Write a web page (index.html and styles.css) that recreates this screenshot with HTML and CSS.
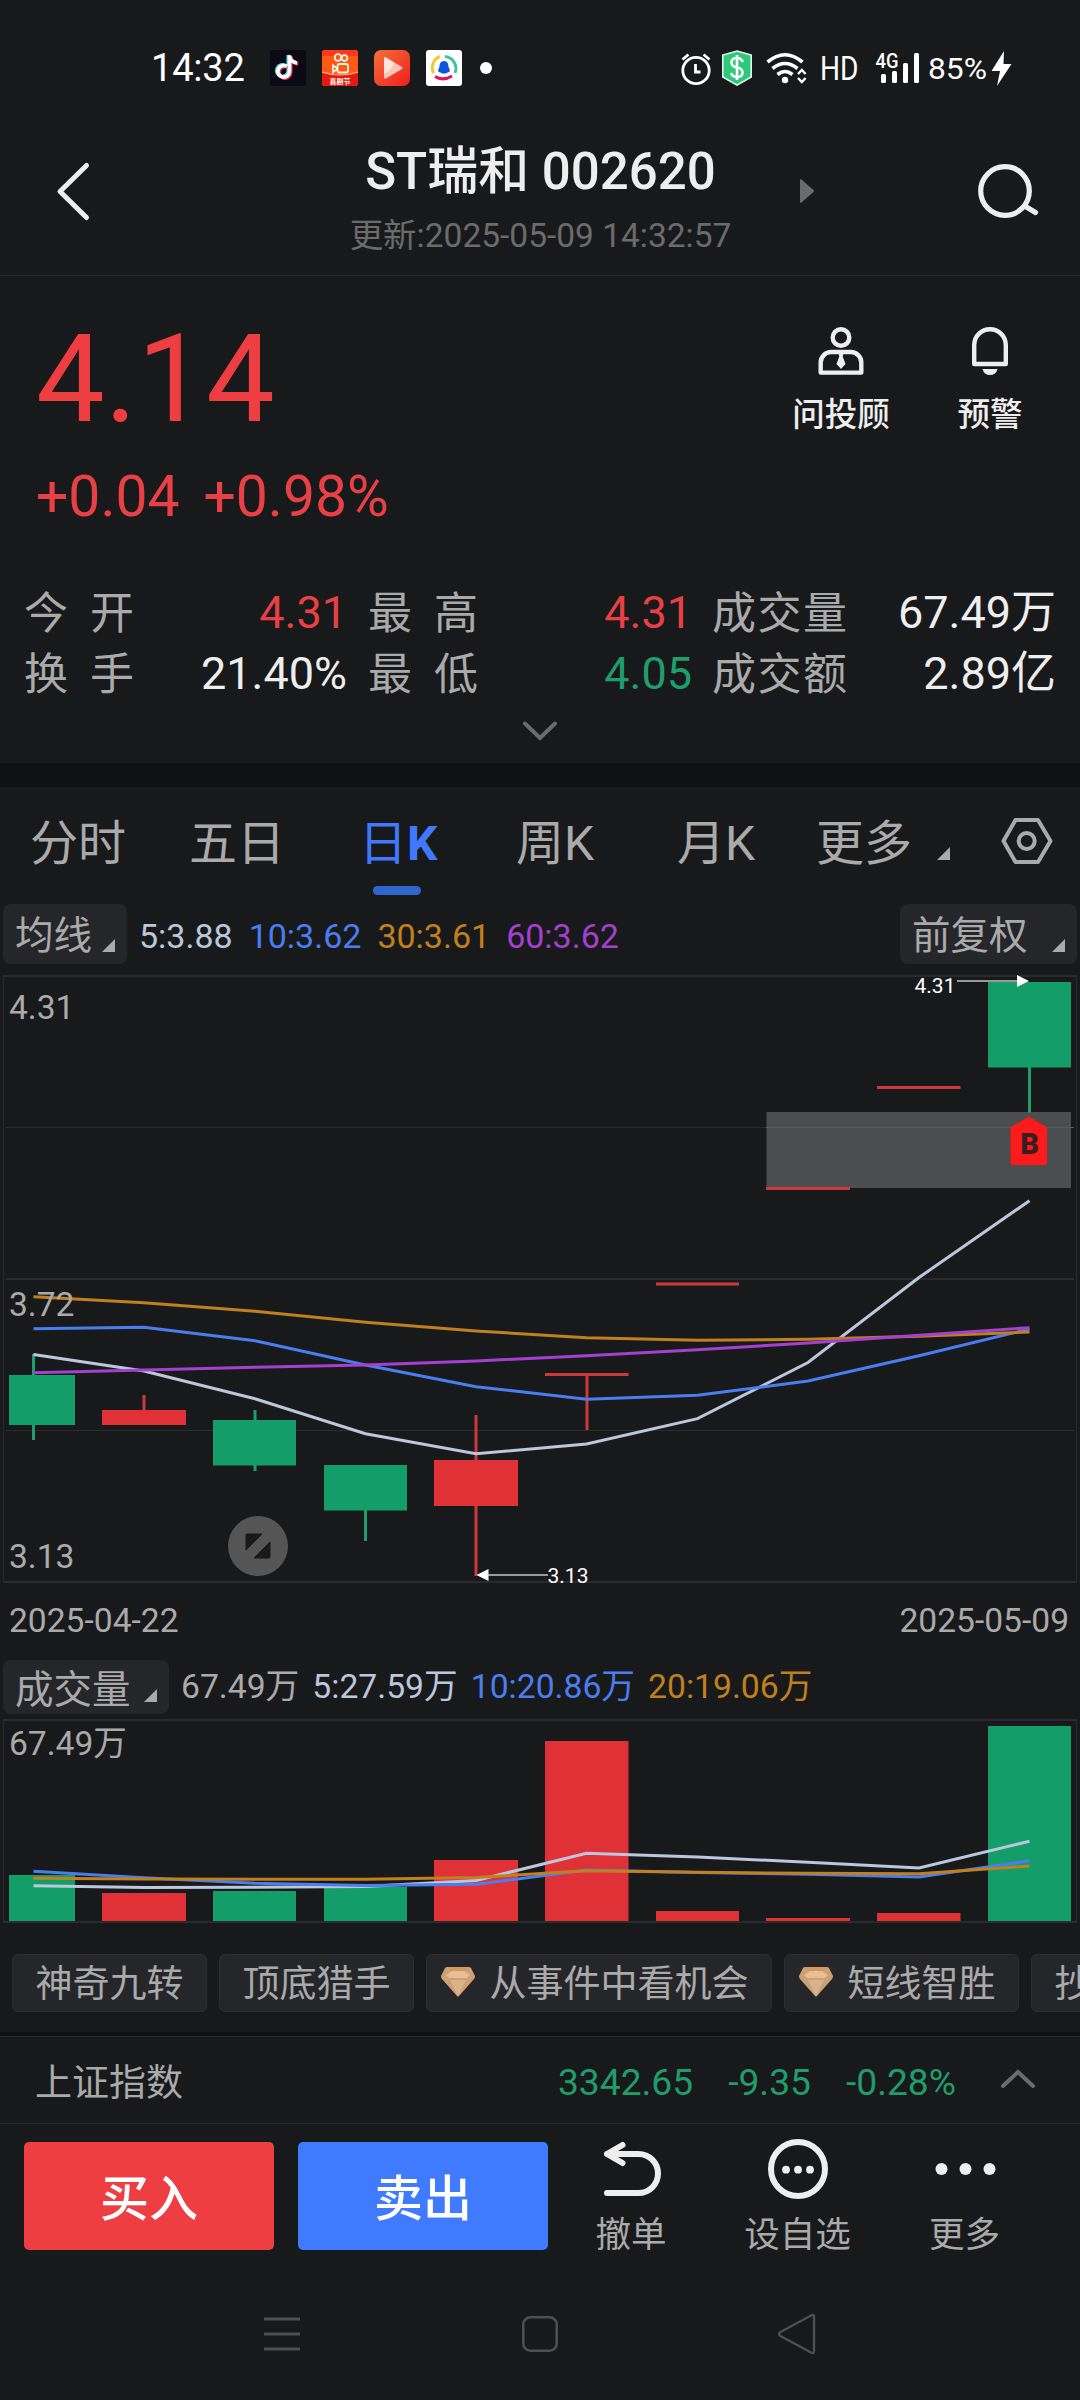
FILE: index.html
```html
<!DOCTYPE html>
<html lang="zh-CN">
<head>
<meta charset="utf-8">
<title>ST瑞和 002620</title>
<link rel="stylesheet" href="styles.css">
</head>
<body>
<div class="screen">
  <div class="status">
    <span class="clock">14:32</span>
    <div class="apps">
      <svg width="36" height="36" viewBox="0 0 36 36"><rect width="36" height="36" rx="3" fill="#0b0a14"/><g fill="none" stroke-width="3.600"><path d="M17 16.500a5.800 5.800 0 1 0 2.500 5V5.500c.6 4 3.500 7 7.500 7.500" stroke="#58e0e4" transform="translate(-1.200 -.6)"/><path d="M17 16.500a5.800 5.800 0 1 0 2.500 5V5.500c.6 4 3.500 7 7.500 7.500" stroke="#f2385c" transform="translate(1.200 1)"/><path d="M17 16.500a5.800 5.800 0 1 0 2.500 5V5.500c.6 4 3.500 7 7.500 7.500" stroke="#fff"/></g></svg>
      <svg width="36" height="36" viewBox="0 0 36 36"><rect width="36" height="36" rx="3" fill="#ff5a14"/><path d="M3 0h30a3 3 0 0 1 3 3v3H0V3a3 3 0 0 1 3-3z" fill="#ff3a1c"/><path d="M0 22q18 6 36 0v11a3 3 0 0 1-3 3H3a3 3 0 0 1-3-3z" fill="#e8180c"/><path d="M0 22q18 6 36 0" fill="none" stroke="#ffb48c" stroke-width="1.200"/><g fill="none" stroke="#fff3e4" stroke-width="1.800"><circle cx="16" cy="7.500" r="3.300"/><circle cx="22.500" cy="8" r="2.800"/><rect x="15.500" y="14" width="10.500" height="8.500" rx="2"/><path d="M15 18.200l-4-3v7l4-3"/></g><text x="18" y="33.500" class="app-tag">喜剧节</text></svg>
      <svg width="36" height="36" viewBox="0 0 36 36"><defs><linearGradient id="play" x1="0" y1="0" x2="1" y2="1"><stop offset="0" stop-color="#f4713a"/><stop offset="1" stop-color="#f01e1e"/></linearGradient></defs><rect width="36" height="36" rx="7" fill="url(#play)"/><path d="M10 8.500q0-2 2-1l16 9.500q1 1 0 2l-16 9.500q-2 1-2-1z" fill="#ffc4b8"/><path d="M10 8.500q0-2 2-1l8 5q-3 9-10 11z" fill="#ffe4dc"/></svg>
      <svg width="36" height="36" viewBox="0 0 36 36"><rect width="36" height="36" rx="3" fill="#fff"/><g fill="none" stroke-width="3"><path d="M14 6.500A12 12 0 0 0 7.500 23" stroke="#f3c73c"/><path d="M19 6.500A12 12 0 0 1 29 23" stroke="#3cc4a0"/><path d="M9 26.500q8 5 17-.5" stroke="#e0145c"/></g><path d="M18 11c4 0 4.500 4 4.500 6 2 3 1.500 6-.5 5-1.500 2-6.500 2-8 0-2 1-2.500-2-.5-5 0-2 .5-6 4.500-6z" fill="#0c54dc"/></svg>
      <i class="dot"></i>
    </div>
    <svg class="sysicons" width="335" height="40" viewBox="680 48 335 40">
      <g fill="none" stroke="#fff" stroke-width="2.800"><circle cx="696" cy="70.500" r="13.200"/><path d="M682.500 59.500l6-5M703.500 54.500l6 5M695.500 64v8h5"/></g>
      <path d="M737 51l14.200 4v22L737 85.200 722.800 77V55z" fill="#2fc97c" stroke="#dff8ea" stroke-width="1.600"/>
      <path d="M743 62q-2-4-6-4-5.500 0-5.500 4.500 0 4 5.500 5t5.500 5q0 4.500-5.500 4.500-4.500 0-6-4M737 55v25" fill="none" stroke="#fff" stroke-width="2.600"/>
      <g fill="none" stroke="#fff" stroke-width="3.600"><path d="M767.500 62q17.500-14.500 35 0M772.500 68.500q12.500-10 25 0M777.500 74.500q7.500-6 15 0"/></g>
      <circle cx="785" cy="80" r="3.200" fill="#fff"/><path d="M798 74l3.800-4 3.800 4M798 78l3.800 4 3.800-4" fill="none" stroke="#fff" stroke-width="2.400"/>
      <text x="820" y="80" class="sys hd" textLength="38.500" lengthAdjust="spacingAndGlyphs">HD</text>
      <text x="875.500" y="68" class="sys net" textLength="23" lengthAdjust="spacingAndGlyphs">4G</text>
      <g fill="#fff"><rect x="881" y="74" width="5" height="9" rx="1.500"/><rect x="892" y="71" width="5" height="12" rx="1.500"/><rect x="903" y="63" width="5" height="20" rx="1.500"/><rect x="914" y="53" width="5" height="30" rx="1.500"/></g>
      <text x="928" y="79" class="sys bat" textLength="59" lengthAdjust="spacingAndGlyphs">85%</text>
      <path d="M1004 51l-12.500 20h8.500l-3 15 14.500-22h-8z" fill="#fff"/>
    </svg>
  </div>

  <header class="header">
    <svg class="back" width="40" height="64" viewBox="54 160 40 64"><path d="M86.500 165.500L60 191.500l26.500 26" class="ln" stroke-width="5"/></svg>
    <div class="titles"><h1>ST瑞和 002620</h1><p>更新:2025-05-09 14:32:57</p></div>
    <svg class="next" width="14" height="24" viewBox="0 0 14 24"><path d="M0 1.500Q0-1 2 1l11.500 10q1 1 0 2L2 23q-2 2-2-.5z" fill="#6b6b6b"/></svg>
    <svg class="search" width="64" height="60" viewBox="976 162 64 60"><g class="ln" stroke-width="5.200"><circle cx="1005" cy="191" r="24.300"/><path d="M1025.500 206.500l10 6"/></g></svg>
  </header>

  <section class="quote">
    <div class="summary">
      <div class="price-box">
        <div class="price">4.14</div>
        <div class="change"><span>+0.04</span><span>+0.98%</span></div>
      </div>
      <div class="actions">
        <div class="action"><svg width="48" height="48" viewBox="0 0 48 48"><g class="ln" stroke-width="4.400"><circle cx="24" cy="10.500" r="8.300"/><path d="M3.700 45.600V35.500A10.500 10.500 0 0 1 14.200 25h19.600a10.500 10.500 0 0 1 10.500 10.500v10.100z"/></g><path d="M21.500 26h5l-.8 3.500 2.800 7.500-4.500 5-4.500-5 2.800-7.500z" fill="#eee"/></svg><span>问投顾</span></div>
        <div class="action"><svg width="48" height="48" viewBox="0 0 48 48"><path d="M8.200 37V18a15.800 15.800 0 0 1 31.600 0v19z" class="ln" stroke-width="4.400"/><path d="M16.500 42h15q-1.500 6-7.500 6t-7.500-6z" fill="#eee"/></svg><span>预警</span></div>
      </div>
    </div>
    <div class="stats">
      <div class="stat wide"><span>今开</span><b class="up">4.31</b></div>
      <div class="stat wide"><span>最高</span><b class="up">4.31</b></div>
      <div class="stat"><span>成交量</span><b>67.49万</b></div>
      <div class="stat wide"><span>换手</span><b>21.40%</b></div>
      <div class="stat wide"><span>最低</span><b class="down">4.05</b></div>
      <div class="stat"><span>成交额</span><b>2.89亿</b></div>
    </div>
    <svg class="expand" width="40" height="24" viewBox="0 0 40 24"><path d="M5 4.500l15 14.500 15-14.500" fill="none" stroke="#6b6b6b" stroke-width="4" stroke-linecap="round"/></svg>
  </section>

  <nav class="tabs">
    <span>分时</span><span>五日</span><span class="active">日<b>K</b></span><span>周K</span><span>月K</span>
    <span class="more">更多<i class="corner"></i></span>
    <svg width="54" height="50" viewBox="0 0 54 50"><g fill="none" stroke="#aaa" stroke-width="4"><path d="M15.500 4h22.500l12.500 21-12.500 21H15.500L3.500 25z" stroke-linejoin="round"/><circle cx="26.700" cy="25" r="8"/></g></svg>
  </nav>

  <div class="legend ma">
    <span class="chip">均线<i class="corner"></i></span>
    <span class="c5">5:3.88</span><span class="c10">10:3.62</span><span class="c30">30:3.61</span><span class="c60">60:3.62</span>
    <span class="chip adj">前复权<i class="corner"></i></span>
  </div>

  <svg class="chart" width="1080" height="624" viewBox="0 964 1080 624">
    <g class="grid"><path d="M3 976h1074M3 1582h1074M6 1279h1068" stroke-width="2"/><path d="M3.500 976v606M1076.500 976v606M6 1127.500h1068M6 1430.500h1068"/></g>
    <rect x="766.500" y="1112" width="304.500" height="76" fill="#4c4d4e"/><path d="M766 1127.500h308" stroke="#5c5d5e"/>
    <g class="g"><path d="M33.500 1354v86M255 1410v61M365.500 1465v76M1029.500 1067v45.500"/>
      <rect x="9" y="1375" width="66" height="50"/><rect x="213" y="1420" width="83" height="45.500"/><rect x="324" y="1465" width="83" height="45.500"/><rect x="988" y="982" width="83" height="85.500"/></g>
    <g class="r"><path d="M144 1395v16M476 1415v161M587 1375v55M545 1374.500h83.500M656 1284h83M766 1188.500h84M877 1087.500h83.500"/>
      <rect x="102" y="1410" width="84" height="15"/><rect x="434" y="1460" width="84" height="46"/></g>
    <g class="lines">
      <polyline class="c5" points="33.500,1354.500 144,1371 255,1398.700 365.500,1433.700 476,1453.700 586.500,1444 697.500,1418.700 808,1362.500 919,1277.500 1029.500,1200.700"/>
      <polyline class="c10" points="33.500,1328.700 144,1327.300 255,1340.700 365.500,1365 476,1386.700 586.500,1399.300 697.500,1395.300 808,1381 919,1355.700 1029.500,1329"/>
      <polyline class="c30" points="33.500,1296.700 144,1302.700 255,1311.300 365.500,1322.300 476,1331 586.500,1337.700 697.500,1340.300 808,1339.300 919,1336.300 1029.500,1332"/>
      <polyline class="c60" points="33.500,1372.700 144,1370 255,1367.300 365.500,1365 476,1361 586.500,1355.700 697.500,1349.700 808,1343 919,1335.300 1029.500,1327.700"/>
    </g>
    <path d="M957 981h62M488 1575h60" stroke="#999" stroke-width="2"/><path d="M1017 975l12 6-12 6zM488.500 1569l-12 6 12 6z" fill="#fff"/>
    <text x="914.500" y="992.700" class="mark">4.31</text><text x="547.500" y="1583" class="mark">3.13</text>
    <path d="M1029 1116.700l18 10.500V1163q0 2-2 2h-32.500q-2 0-2-2v-35.800z" fill="#fc1a1a"/><text x="1029.500" y="1154" class="buy">B</text>
    <text x="9" y="1019" class="axis">4.31</text><text x="9" y="1316" class="axis">3.72</text><text x="9" y="1568" class="axis">3.13</text>
    <circle cx="258" cy="1546" r="30" fill="#555"/><path d="M247 1534h15l-16 16v-15q0-1 1-1zM270 1542v15q0 1-1 1h-15z" fill="#18191b" stroke="#18191b" stroke-linejoin="round"/>
  </svg>
  <div class="dates"><span>2025-04-22</span><span>2025-05-09</span></div>

  <div class="legend vol">
    <span class="chip">成交量<i class="corner"></i></span>
    <span>67.49万</span><span class="c5">5:27.59万</span><span class="c10">10:20.86万</span><span class="c30">20:19.06万</span>
  </div>
  <svg class="chart" width="1080" height="240" viewBox="0 1714 1080 240">
    <g class="grid"><path d="M3 1720h1074M3 1922h1074" stroke-width="2"/><path d="M3.500 1720v202M1076.500 1720v202"/></g>
    <g class="g"><rect x="9" y="1875" width="66" height="46"/><rect x="213" y="1891" width="83" height="30"/><rect x="324" y="1887" width="83" height="34"/><rect x="988" y="1726" width="83" height="195"/></g>
    <g class="r"><rect x="102" y="1893" width="84" height="28"/><rect x="434" y="1860" width="84" height="61"/><rect x="545" y="1741" width="83.500" height="180"/><rect x="656" y="1911" width="83" height="10"/><rect x="766" y="1918" width="84" height="3"/><rect x="877" y="1913" width="83.500" height="8"/></g>
    <g class="lines">
      <polyline class="c5" points="33.500,1885.700 144,1887.500 255,1887.300 365.500,1886.500 476,1880.500 586.500,1853.300 697.500,1857 808,1862.300 919,1868 1029.500,1841.300"/>
      <polyline class="c10" points="33.500,1871.300 144,1877.700 255,1883.300 365.500,1885.500 476,1884.300 586.500,1870 697.500,1872.500 808,1874.300 919,1877 1029.500,1860.700"/>
      <polyline class="c30" points="33.500,1878.300 144,1879 255,1879.300 365.500,1879.300 476,1877.500 586.500,1870.700 697.500,1872.300 808,1873.300 919,1873.700 1029.500,1866"/>
    </g>
    <text x="9" y="1755" class="axis">67.49万</text>
  </svg>

  <div class="tools">
    <span class="tool">神奇九转</span>
    <span class="tool">顶底猎手</span>
    <span class="tool vip"><svg width="34" height="30" viewBox="0 0 34 30"><path d="M6 0h22q1 0 2 1l4 8q0 2-1 3L18 29q-1 1-2 0L1 12q-1-1-1-3l4-8q1-1 2-1z" fill="#cda174"/><path d="M6 0h22l-5 5H11z" fill="#d39a60"/><path d="M5 8l6-4h12l6 4-3 3H8z" fill="#e6bf96"/><path d="M9 13h16l-8 16z" fill="#d9b489"/></svg>从事件中看机会</span>
    <span class="tool vip"><svg width="34" height="30" viewBox="0 0 34 30"><path d="M6 0h22q1 0 2 1l4 8q0 2-1 3L18 29q-1 1-2 0L1 12q-1-1-1-3l4-8q1-1 2-1z" fill="#cda174"/><path d="M6 0h22l-5 5H11z" fill="#d39a60"/><path d="M5 8l6-4h12l6 4-3 3H8z" fill="#e6bf96"/><path d="M9 13h16l-8 16z" fill="#d9b489"/></svg>短线智胜</span>
    <span class="tool">抄</span>
  </div>

  <div class="index">
    <span class="name">上证指数</span>
    <span>3342.65</span><span>-9.35</span><span>-0.28%</span>
    <svg width="36" height="20" viewBox="0 0 36 20"><path d="M3 17L18 3l15 14" fill="none" stroke="#6b6b6b" stroke-width="4" stroke-linecap="round"/></svg>
  </div>

  <div class="trade">
    <button class="btn buy-btn">买入</button>
    <button class="btn sell-btn">卖出</button>
    <div class="op"><svg width="64" height="64" viewBox="0 0 64 64"><path d="M23.500 8L8 17l15.500 9M8 17H39.500a19.500 19.500 0 0 1 0 39H8" class="ln" stroke-width="6"/></svg><span>撤单</span></div>
    <div class="op"><svg width="64" height="64" viewBox="0 0 64 64"><circle cx="32" cy="32" r="27" class="ln" stroke-width="6"/><g fill="#eee"><circle cx="20" cy="32.700" r="3.900"/><circle cx="32" cy="32.700" r="3.900"/><circle cx="44" cy="32.700" r="3.900"/></g></svg><span>设自选</span></div>
    <div class="op"><svg width="64" height="64" viewBox="0 0 64 64"><g fill="#eee"><circle cx="8.500" cy="32" r="6"/><circle cx="32.500" cy="32" r="6"/><circle cx="56.500" cy="32" r="6"/></g></svg><span>更多</span></div>
  </div>

  <div class="sysnav">
    <svg width="40" height="44" viewBox="0 0 40 44"><path d="M2 7h36M2 22h36M2 37h36" stroke="#4e4f50" stroke-width="2.800"/></svg>
    <svg width="40" height="44" viewBox="0 0 40 44"><rect x="3.300" y="5.300" width="33.400" height="33.400" rx="7" fill="none" stroke="#4e4f50" stroke-width="2.600"/></svg>
    <svg width="40" height="44" viewBox="0 0 40 44"><path d="M33 3.500Q36 2 36 5v34q0 3-3 1.500L2.500 24q-3-2 0-4z" fill="none" stroke="#4e4f50" stroke-width="2.400"/></svg>
  </div>
</div>
</body>
</html>
```
FILE: styles.css
```css
* { box-sizing: border-box; }
body {
  margin: 0;
  background: #18191b;
  color: #aaa;
  font-family: Roboto, "Noto Sans CJK SC", sans-serif;
}
svg { display: block; flex: none; }
.screen { width: 1080px; height: 2400px; overflow: hidden; display: flex; flex-direction: column; }
.screen > * { flex: none; }
.ln { fill: none; stroke: #eee; stroke-linecap: round; stroke-linejoin: round; }

/* system status bar */
.status { height: 136px; padding: 0 65px 0 151px; display: flex; align-items: center; }
.clock { width: 119px; font-size: 38px; letter-spacing: -0.2px; color: #fff; }
.apps { display: flex; align-items: center; gap: 16px; }
.app-tag { font-size: 7px; font-weight: 700; fill: #fff; text-anchor: middle; }
.dot { width: 12px; height: 12px; margin-left: 2px; border-radius: 50%; background: #fff; }
.sysicons { margin-left: auto; }
.sys { fill: #fff; }
.hd { font-size: 34px; }
.net { font-size: 20px; font-weight: 500; }
.bat { font-size: 30px; }

/* title bar */
.header { height: 140px; display: grid; grid-template-columns: 280px 521px 173px 1fr; border-bottom: 1px solid #2a2b2d; }
.back { margin: 24px 0 0 54px; }
.titles { text-align: center; white-space: nowrap; }
.titles h1 { margin: 0; font-size: 51px; line-height: 72px; font-weight: 500; color: #eee; }
.titles p { margin: 5px 0 0; font-size: 33.5px; line-height: 45px; color: #6b6b6b; }
.next { margin-top: 43px; margin-left: -1px; }
.search { margin: 26px 0 0 2px; }

/* price summary */
.quote { height: 511px; border-bottom: 24px solid #101113; }
.summary { height: 307px; padding: 33px 30px 0 36px; display: flex; justify-content: space-between; }
.price { font-size: 122.5px; line-height: 141px; color: #ee3e42; }
.change { display: flex; gap: 24px; margin-top: 12px; font-size: 57px; line-height: 70px; color: #e94045; }
.actions { display: flex; gap: 29px; padding-top: 18px; }
.action { width: 120px; display: flex; flex-direction: column; align-items: center; font-size: 32.5px; line-height: 40px; font-weight: 500; color: #eee; }
.action span { margin-top: 20px; }
.stats { display: grid; grid-template-columns: 322px 324px 344px; column-gap: 22px; padding-left: 24px; line-height: 60px; grid-auto-rows: 61px; }
.stat { display: flex; justify-content: space-between; font-size: 45px; white-space: nowrap; }
.stat:nth-child(3n) { margin-left: -2px; margin-right: 2px; }
.stat span { font-size: 44px; letter-spacing: 1.5px; padding-top: 1px; }
.stat.wide span { letter-spacing: 22px; }
.stat b { font-weight: 400; color: #eee; }
.stat:nth-child(3n+1) b { margin-right: -1px; }
.stat .up { color: #e94045; }
.stat .down { color: #1f9d6c; }
.expand { margin: 14px auto 0; }

/* period tabs */
.tabs { height: 117px; padding-left: 30px; display: grid; grid-template-columns: 159px 170px 157px 161px 139px 184px 54px; font-size: 48px; line-height: 114px; }
.tabs svg { margin-top: 29px; }
.active { position: relative; color: #4079ff; }
.active::after { content: ""; position: absolute; left: 14px; top: 99px; width: 48px; height: 9px; border-radius: 4.5px; background: #2f65cf; }
.corner { display: inline-block; width: 13px; height: 13px; background: #aaa; clip-path: polygon(100% 0, 100% 100%, 0 100%); }
.more .corner { margin-left: 25px; }

/* indicator legends */
.legend { display: flex; padding: 0 3px; font-size: 34px; white-space: nowrap; }
.chip { display: flex; align-items: flex-end; justify-content: space-between; padding: 0 12px; border-radius: 8px; background: #25262a; font-size: 38.5px; }
.ma { height: 60px; line-height: 64px; gap: 16px; }
.ma .chip { width: 124px; height: 60px; margin-right: -4px; line-height: 56px; }
.ma .chip.adj { width: 177px; margin: 0 0 0 auto; }
.ma .corner { margin-bottom: 12px; }
.vol { height: 54px; line-height: 54px; gap: 13px; font-size: 33.7px; }
.vol .chip { width: 166px; height: 54px; margin-right: -1px; line-height: 48px; }
.vol .corner { margin-bottom: 12px; }
.c5 { color: #bcc6dc; }
.c10 { color: #4a7df0; }
.c30 { color: #c0801e; }
.c60 { color: #a43fd0; }

/* charts */
.grid path { fill: none; stroke: #2a2b2e; }
.g { fill: #139e69; }
.r { fill: #e03236; }
.g path { stroke: #1f9d6c; stroke-width: 3; }
.r path { stroke: #cf383b; stroke-width: 3; }
.lines polyline { fill: none; stroke: currentColor; stroke-width: 3; }
.axis { font-size: 33.6px; fill: #aaa; }
.mark { font-size: 21px; fill: #fff; }
.buy { font-size: 29px; font-weight: 900; fill: #3a1c22; text-anchor: middle; }
.dates { height: 72px; padding: 10px 11px 0 9px; display: flex; justify-content: space-between; font-size: 33.6px; line-height: 45px; }

/* tool chips */
.tools { height: 82px; padding-left: 12px; display: flex; align-items: flex-start; gap: 12px; overflow: hidden; border-bottom: 4px solid #101113; }
.tool { flex: none; height: 58px; padding: 0 22.5px; border: 1px solid #2c2d30; border-radius: 6px; background: #25262a; font-size: 37px; line-height: 60px; display: flex; }
.tool.vip { padding: 0 22.5px 0 14px; }
.tool svg { margin: 12px 14.5px 0 0; }

/* index strip */
.index { height: 88px; padding: 0 44px 0 35px; display: flex; border-top: 1px solid #2a2b2d; border-bottom: 1px solid #2a2b2d; font-size: 37.2px; line-height: 91px; color: #1f9d6c; gap: 35px; }
.index .name { color: #aaa; margin-right: auto; font-size: 37px; line-height: 94px; }
.index svg { margin: 32px 0 0 9px; }

/* trading bar */
.trade { height: 156px; padding: 18px 0 0 24px; display: flex; }
.btn { width: 250px; height: 108px; margin-right: 24px; padding: 8px 0 0; border: 0; border-radius: 5px; color: #fff; font: 500 49px/100px Roboto, "Noto Sans CJK SC", sans-serif; }
.buy-btn { background: #ee3e42; }
.sell-btn { background: #407aff; }
.op { width: 167px; margin: -5px 0 0 0; display: flex; flex-direction: column; align-items: center; font-size: 35.5px; line-height: 44px; }
.op:nth-child(3) { width: 118px; margin-right: 24px; }
.op span { margin-top: 12px; }

/* navigation keys */
.sysnav { padding: 32px 262px 0; display: flex; justify-content: space-between; }
```
